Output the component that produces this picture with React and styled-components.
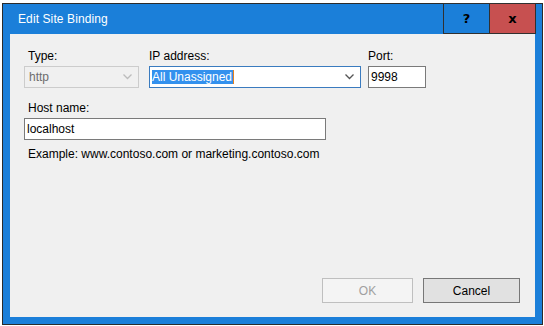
import React from "react";
import styled, { createGlobalStyle } from "styled-components";

const Global = createGlobalStyle`
  html, body { margin: 0; padding: 0; background: #ffffff; }
  body { font-family: "Segoe UI", "Liberation Sans", Arial, sans-serif; }
  * { box-sizing: border-box; }
`;

const Desktop = styled.div`
  width: 544px;
  height: 326px;
  padding: 3px 0 0 2px;
  overflow: hidden;
`;

const Window = styled.div`
  width: 541px;
  height: 322px;
  border: 1px solid #2b2b2b;
  background: #1b7fd9;
  padding: 0 7px 7px 7px;
  display: flex;
  flex-direction: column;
`;

const TitleBar = styled.div`
  height: 30px;
  display: flex;
  align-items: flex-start;
  padding-left: 8px;
  flex-shrink: 0;
`;

const Title = styled.div`
  flex: 1;
  color: #ffffff;
  font-size: 12px;
  line-height: 16px;
  margin-top: 7px;
  letter-spacing: 0.1px;
`;

const CaptionButton = styled.div`
  width: 47px;
  height: 31px;
  margin-top: -1px;
  border: 1px solid #303030;
  background: ${(p) => (p.$close ? "#c75050" : "transparent")};
  display: flex;
  align-items: center;
  justify-content: center;
  font-family: "DejaVu Sans", "Liberation Sans", sans-serif;
  font-weight: bold;
  font-size: 13px;
  color: #000;
  & + & { margin-left: -1px; }
  &:last-child { margin-right: -1px; }
`;

const Client = styled.div`
  flex: 1;
  background: #f0f0f0;
  padding: 14px 15px 14px 14px;
  display: flex;
  flex-direction: column;
  font-size: 12px;
  color: #000;
`;

const FieldRow = styled.div`
  display: flex;
  align-items: flex-start;
`;

const Field = styled.div`
  display: flex;
  flex-direction: column;
  margin-left: ${(p) => p.$ml || 0}px;
`;

const Label = styled.div`
  font-size: 12px;
  line-height: 16px;
  height: 18px;
  padding-left: ${(p) => p.$indent ?? 4}px;
`;

const Box = styled.div`
  width: ${(p) => p.$w}px;
  height: 22px;
  border: 1px solid ${(p) => p.$border || "#7a7a7a"};
  background: ${(p) => (p.$disabled ? "#f0f0f0" : "#ffffff")};
  display: flex;
  align-items: center;
  padding: 0 6px 0 ${(p) => p.$pl ?? 3}px;
  color: ${(p) => (p.$disabled ? "#6d6d6d" : "#000")};
  font-size: 12px;
  line-height: 16px;
`;

const BoxText = styled.span`
  flex: 1;
  white-space: nowrap;
`;

const Selected = styled.span`
  background: #3391ee;
  color: #fff;
  padding: 0 1px 0 0;
  border-right: 1px solid #e8821e;
  line-height: 14px;
  display: inline-block;
`;

const Chevron = ({ color }) => (
  <svg width="9" height="6" viewBox="0 0 9 6">
    <path d="M0.5 0.5 L4.5 4.5 L8.5 0.5" fill="none" stroke={color} strokeWidth="1.3" />
  </svg>
);

const HostBlock = styled.div`
  margin-top: 12px;
  display: flex;
  flex-direction: column;
`;

const Example = styled.div`
  margin-top: 6px;
  padding-left: 4px;
  font-size: 12px;
  line-height: 16px;
`;

const Spacer = styled.div`
  flex: 1;
`;

const ButtonRow = styled.div`
  display: flex;
  justify-content: flex-end;
  gap: 10px;
`;

const Button = styled.div`
  width: ${(p) => p.$w}px;
  height: 25px;
  border: 1px solid ${(p) => (p.$disabled ? "#bfbfbf" : "#777777")};
  background: ${(p) => (p.$disabled ? "#f4f4f4" : "#e1e1e1")};
  color: ${(p) => (p.$disabled ? "#a0a0a0" : "#000")};
  display: flex;
  align-items: center;
  justify-content: center;
  font-size: 12px;
`;

export default function App() {
  return (
    <>
      <Global />
      <Desktop>
        <Window>
          <TitleBar>
            <Title>Edit Site Binding</Title>
            <CaptionButton>?</CaptionButton>
            <CaptionButton $close>x</CaptionButton>
          </TitleBar>
          <Client>
            <FieldRow>
              <Field>
                <Label>Type:</Label>
                <Box $w={115} $border="#cccccc" $disabled $pl={4}>
                  <BoxText>http</BoxText>
                  <Chevron color="#bcbcbc" />
                </Box>
              </Field>
              <Field $ml={10}>
                <Label $indent={0}>IP address:</Label>
                <Box $w={212} $border="#3a7bbf" $pl={2}>
                  <BoxText>
                    <Selected>All Unassigned</Selected>
                  </BoxText>
                  <Chevron color="#555555" />
                </Box>
              </Field>
              <Field $ml={7}>
                <Label $indent={0}>Port:</Label>
                <Box $w={58} $pl={2}>
                  <BoxText>9998</BoxText>
                </Box>
              </Field>
            </FieldRow>
            <HostBlock>
              <Label>Host name:</Label>
              <Box $w={302} $pl={2}>
                <BoxText>localhost</BoxText>
              </Box>
            </HostBlock>
            <Example>Example: www.contoso.com or marketing.contoso.com</Example>
            <Spacer />
            <ButtonRow>
              <Button $w={91} $disabled>OK</Button>
              <Button $w={97}>Cancel</Button>
            </ButtonRow>
          </Client>
        </Window>
      </Desktop>
    </>
  );
}
